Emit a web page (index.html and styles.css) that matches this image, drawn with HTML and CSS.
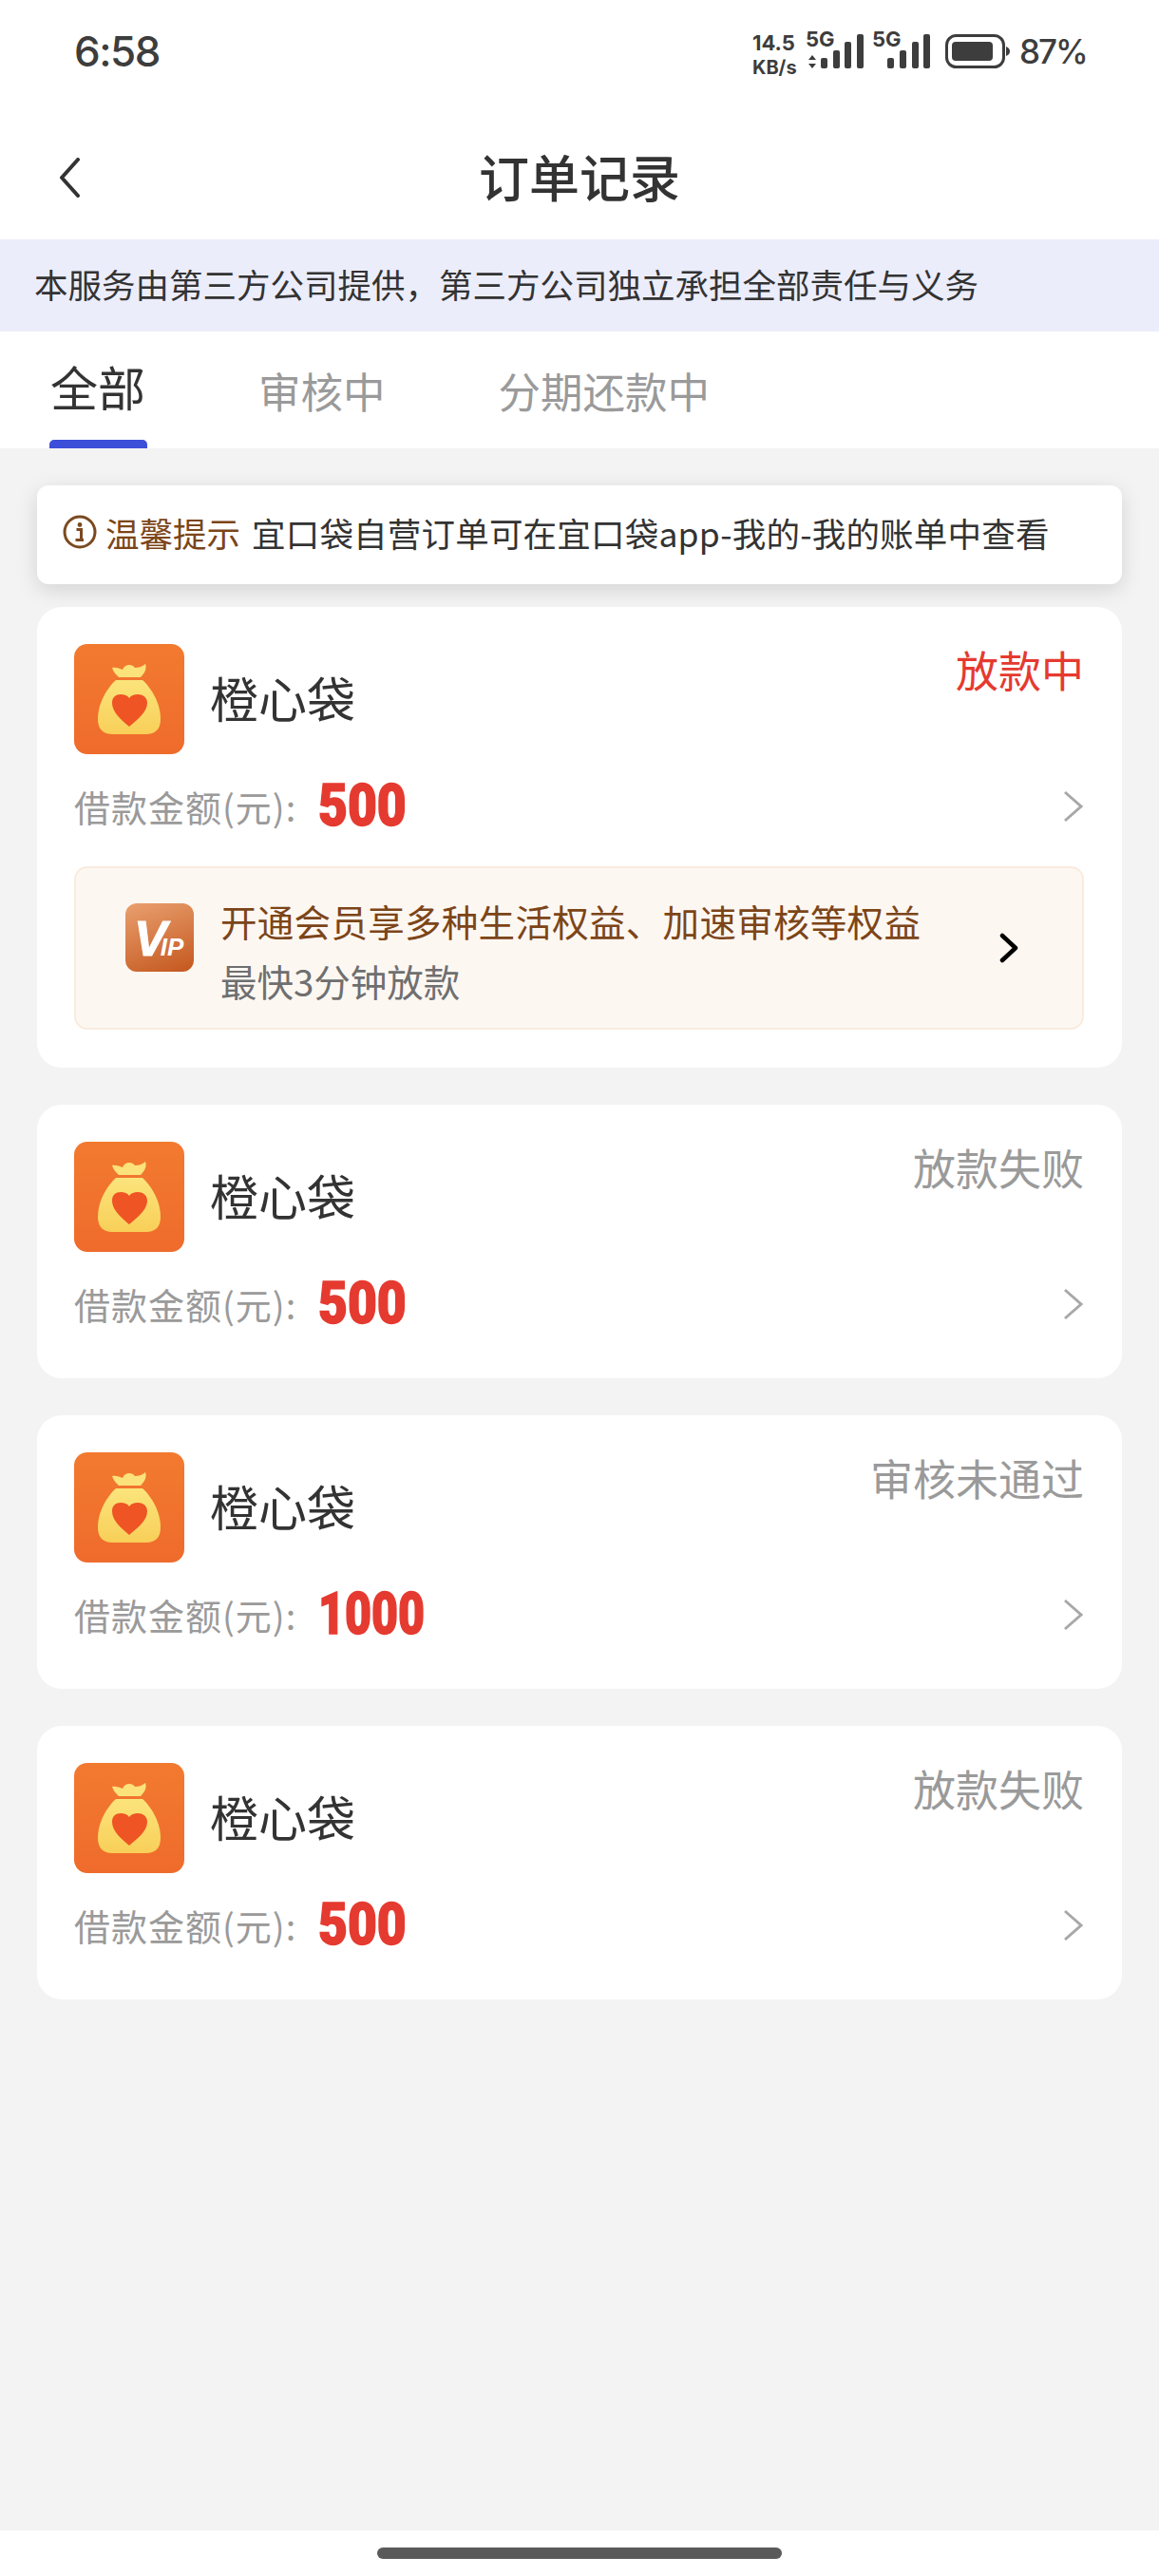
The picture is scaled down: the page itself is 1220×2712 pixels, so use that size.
FILE: index.html
```html
<!DOCTYPE html>
<html lang="zh-CN">
<head>
    <meta charset="UTF-8">
    <meta name="viewport" content="width=device-width, initial-scale=1.0">
    <title>订单记录</title>
    <link rel="stylesheet" href="styles.css">
</head>
<body>
<svg class="sprites" width="0" height="0">
    <defs>
        <linearGradient id="logoBg" x1="0" y1="0" x2="0" y2="1">
            <stop offset="0" stop-color="#f27a2f"/>
            <stop offset="1" stop-color="#ef6b2c"/>
        </linearGradient>
        <linearGradient id="bagFill" x1="0" y1="0" x2="0" y2="1">
            <stop offset="0" stop-color="#fbe47c"/>
            <stop offset="1" stop-color="#f8cf58"/>
        </linearGradient>
        <symbol id="bagLogo" viewBox="0 0 116 116">
            <rect width="116" height="116" rx="14" fill="url(#logoBg)"/>
            <path d="M40 25 C44 24 48 26 51 27 C53 22 60 20 64 25 C68 25 71 24 75 21 C77 26 74 31 70 35 L47 35 C44 32 41 29 40 25Z" fill="#fbe27a"/>
            <path d="M44 38 L72 38 C81 46 91 62 91 79 C91 90 85 95 76 95 L40 95 C31 95 25 90 25 79 C25 62 35 46 44 38Z" fill="url(#bagFill)"/>
            <path d="M58 87 C50 80 40 72 40 62 C40 56 44 53 49 53 C53 53 56 54 58 57 C60 54 63 53 67 53 C72 53 77 56 77 62 C77 72 66 80 58 87Z" fill="#ee5424"/>
        </symbol>
    </defs>
</svg>

<div class="page">
    <div class="status-bar">
        <span class="time">6:58</span>
        <div class="status-icons">
            <div class="speed"><span>14.5</span><span class="speed-unit">KB/s</span></div>
            <div class="signal first">
                <span class="net">5G</span>
                <svg width="66" height="42" viewBox="0 0 66 42">
                    <path d="M7 26l4 5H3zM7 40l4-5H3z" fill="#3d3d3d"/>
                    <rect x="16" y="29" width="7" height="11" rx="2" fill="#3d3d3d"/>
                    <rect x="29" y="21" width="7" height="19" rx="2" fill="#3d3d3d"/>
                    <rect x="41" y="12" width="7" height="28" rx="2" fill="#3d3d3d"/>
                    <rect x="54" y="4" width="7" height="36" rx="2" fill="#3d3d3d"/>
                </svg>
            </div>
            <div class="signal">
                <span class="net">5G</span>
                <svg width="62" height="42" viewBox="0 0 62 42">
                    <rect x="16" y="29" width="7" height="11" rx="2" fill="#3d3d3d"/>
                    <rect x="29" y="21" width="7" height="19" rx="2" fill="#3d3d3d"/>
                    <rect x="42" y="12" width="7" height="28" rx="2" fill="#3d3d3d"/>
                    <rect x="54" y="4" width="7" height="36" rx="2" fill="#3d3d3d"/>
                </svg>
            </div>
            <svg class="battery" width="68" height="36" viewBox="0 0 68 36">
                <rect x="1.5" y="1.5" width="60" height="33" rx="10" fill="none" stroke="#3d3d3d" stroke-width="3"/>
                <rect x="7" y="8" width="43" height="20" rx="4" fill="#3d3d3d"/>
                <path d="M64 13c3 1 4 3 4 5s-1 4-4 5z" fill="#3d3d3d"/>
            </svg>
            <span class="percent">87%</span>
        </div>
    </div>

    <div class="nav">
        <svg class="back" width="24" height="42" viewBox="0 0 24 42">
            <path d="M21 2 L4 21 L21 40" fill="none" stroke="#333" stroke-width="4" stroke-linecap="round" stroke-linejoin="round"/>
        </svg>
        <h1>订单记录</h1>
    </div>

    <div class="banner">本服务由第三方公司提供，第三方公司独立承担全部责任与义务</div>

    <div class="tabs">
        <div class="tab active">全部</div>
        <div class="tab">审核中</div>
        <div class="tab">分期还款中</div>
    </div>

    <div class="content">
        <div class="notice">
            <svg class="notice-icon" width="36" height="36" viewBox="0 0 36 36">
                <circle cx="18" cy="18" r="16" fill="none" stroke="#7b4a20" stroke-width="3"/>
                <circle cx="18" cy="10.5" r="2.4" fill="#7b4a20"/>
                <path d="M14.5 15.5h5v11h2.5M13.5 26.5h8" fill="none" stroke="#7b4a20" stroke-width="3"/>
            </svg>
            <span class="notice-title">温馨提示</span>
            <span class="notice-text">宜口袋自营订单可在宜口袋app-我的-我的账单中查看</span>
        </div>

        <div class="order">
            <div class="order-head">
                <svg class="logo"><use href="#bagLogo"/></svg>
                <span class="order-name">橙心袋</span>
                <span class="order-status pending">放款中</span>
            </div>
            <div class="order-amount">
                <span class="amount-label">借款金额(元):</span>
                <span class="amount-value">500</span>
                <svg class="more" width="22" height="34" viewBox="0 0 22 34"><path d="M2 2 L19 17 L2 32" fill="none" stroke="#a8a8a8" stroke-width="3"/></svg>
            </div>
            <div class="promo">
                <div class="vip-badge"><span class="vip-v">V</span><span class="vip-ip">IP</span></div>
                <div class="promo-text">
                    <div class="promo-title">开通会员享多种生活权益、加速审核等权益</div>
                    <div class="promo-sub">最快3分钟放款</div>
                </div>
                <svg class="promo-arrow" width="20" height="32" viewBox="0 0 20 32"><path d="M3 3 L17 16 L3 29" fill="none" stroke="#000" stroke-width="4.5" stroke-linecap="round" stroke-linejoin="round"/></svg>
            </div>
        </div>

        <div class="order">
            <div class="order-head">
                <svg class="logo"><use href="#bagLogo"/></svg>
                <span class="order-name">橙心袋</span>
                <span class="order-status">放款失败</span>
            </div>
            <div class="order-amount">
                <span class="amount-label">借款金额(元):</span>
                <span class="amount-value">500</span>
                <svg class="more" width="22" height="34" viewBox="0 0 22 34"><path d="M2 2 L19 17 L2 32" fill="none" stroke="#a8a8a8" stroke-width="3"/></svg>
            </div>
        </div>

        <div class="order">
            <div class="order-head">
                <svg class="logo"><use href="#bagLogo"/></svg>
                <span class="order-name">橙心袋</span>
                <span class="order-status">审核未通过</span>
            </div>
            <div class="order-amount">
                <span class="amount-label">借款金额(元):</span>
                <span class="amount-value long">1000</span>
                <svg class="more" width="22" height="34" viewBox="0 0 22 34"><path d="M2 2 L19 17 L2 32" fill="none" stroke="#a8a8a8" stroke-width="3"/></svg>
            </div>
        </div>

        <div class="order">
            <div class="order-head">
                <svg class="logo"><use href="#bagLogo"/></svg>
                <span class="order-name">橙心袋</span>
                <span class="order-status">放款失败</span>
            </div>
            <div class="order-amount">
                <span class="amount-label">借款金额(元):</span>
                <span class="amount-value">500</span>
                <svg class="more" width="22" height="34" viewBox="0 0 22 34"><path d="M2 2 L19 17 L2 32" fill="none" stroke="#a8a8a8" stroke-width="3"/></svg>
            </div>
        </div>
    </div>

    <div class="home-bar"><div class="home-pill"></div></div>
</div>
</body>
</html>
```

FILE: styles.css
```css
:root {
    --text: #333333;
    --gray: #9a9a9a;
    --red: #e53a30;
    --brown: #7c4518;
    --bg: #f3f3f3;
}

* {
    margin: 0;
    padding: 0;
    box-sizing: border-box;
}

body {
    font-family: "Noto Sans CJK SC", "Noto Sans", sans-serif;
    background: #ffffff;
    color: var(--text);
}

.sprites {
    position: absolute;
}

.page {
    width: 1220px;
    height: 2712px;
    display: flex;
    flex-direction: column;
}

/* Status bar */
.status-bar {
    height: 108px;
    display: flex;
    justify-content: space-between;
    align-items: flex-start;
    padding: 28px 77px 0 78px;
    font-family: Inter, "Noto Sans", sans-serif;
    color: #3d3d3d;
}

.time {
    font-size: 44px;
    line-height: 52px;
    font-weight: 500;
    letter-spacing: -1.5px;
}

.status-icons {
    display: flex;
    align-items: flex-start;
    margin-top: 4px;
}

.speed {
    width: 56px;
    display: flex;
    flex-direction: column;
    font-size: 22px;
    font-weight: 700;
    line-height: 26px;
}

.speed-unit {
    font-size: 20px;
}

.signal {
    position: relative;
    display: flex;
    margin-right: 15px;
}

.signal.first {
    margin-right: 4px;
}

.net {
    position: absolute;
    left: 0;
    top: -4px;
    font-size: 22px;
    font-weight: 700;
    line-height: 26px;
}

.battery {
    margin: 4px 10px 0 0;
}

.percent {
    width: 70px;
    font-size: 35px;
    line-height: 44px;
    font-weight: 500;
    letter-spacing: -2px;
    white-space: nowrap;
}

/* Header */
.nav {
    height: 144px;
    position: relative;
    display: flex;
    justify-content: center;
    align-items: center;
    padding-top: 10px;
}

.back {
    position: absolute;
    left: 61px;
    top: 58px;
}

.nav h1 {
    font-size: 53px;
    font-weight: 500;
    line-height: 70px;
}

.banner {
    height: 97px;
    background: #ecedfb;
    padding-left: 36px;
    font-size: 35.5px;
    line-height: 94px;
}

/* Tabs */
.tabs {
    height: 123px;
    display: flex;
    padding-left: 53px;
    gap: 119px;
}

.tab {
    position: relative;
    font-size: 44.5px;
    line-height: 123px;
    height: 123px;
    color: var(--gray);
}

.tab.active {
    font-size: 50px;
    line-height: 115px;
    color: var(--text);
}

.tab.active::after {
    content: "";
    position: absolute;
    left: -1px;
    right: -2px;
    bottom: 0;
    height: 9px;
    background: #3b4fd9;
    border-radius: 5px 5px 0 0;
}

/* List */
.content {
    flex: 1;
    background: var(--bg);
    padding: 39px 39px 0;
    display: flex;
    flex-direction: column;
    gap: 39px;
}

.notice {
    height: 104px;
    margin-bottom: -15px;
    background: #ffffff;
    border-radius: 12px;
    box-shadow: 0 6px 22px rgba(0, 0, 0, 0.13);
    display: flex;
    align-items: center;
    padding: 0 0 6px 27px;
    font-size: 35.5px;
    position: relative;
}

.notice-icon {
    margin-right: 9px;
}

.notice-title {
    color: var(--brown);
    margin-right: 12px;
}

.notice-text {
    letter-spacing: 0.2px;
}

.order {
    background: #ffffff;
    border-radius: 26px;
    padding: 39px 40px 39px 39px;
}

.order-head {
    display: flex;
    align-items: center;
}

.logo {
    width: 116px;
    height: 116px;
}

.order-name {
    margin: -4px 0 0 27px;
    font-size: 51px;
    line-height: 70px;
}

.order-status {
    margin: -2px 0 0 auto;
    align-self: flex-start;
    font-size: 45px;
    line-height: 58px;
    color: var(--gray);
}

.order-status.pending {
    color: var(--red);
}

.order-amount {
    height: 60px;
    margin: 24px 0 10px;
    display: flex;
    align-items: center;
}

.amount-label {
    font-size: 38px;
    letter-spacing: 1px;
    color: var(--gray);
}

.amount-value {
    display: inline-block;
    margin-left: 23px;
    font-family: Roboto, sans-serif;
    font-size: 62px;
    font-weight: 900;
    line-height: 60px;
    color: var(--red);
    -webkit-text-stroke: 1.5px var(--red);
    transform: scaleX(0.86);
    transform-origin: left center;
}

.amount-value.long {
    transform: scaleX(0.78);
}

.more {
    margin: 2px 0 0 auto;
}

/* VIP promo */
.promo {
    height: 172px;
    margin: 34px 0 1px;
    background: #fdf7f2;
    border: 2px solid #f9ebdf;
    border-radius: 14px;
    display: flex;
    align-items: flex-start;
    padding: 24px 67px 0 52px;
}

.vip-badge {
    width: 72px;
    height: 72px;
    margin-top: 13px;
    flex: none;
    border-radius: 12px;
    background: linear-gradient(160deg, #e9a06f, #c4571e);
    color: #ffffff;
    font-family: "Liberation Sans", sans-serif;
    font-weight: 700;
    font-style: italic;
    display: flex;
    align-items: baseline;
    padding: 10px 0 0 9px;
}

.vip-v {
    font-size: 52px;
    line-height: 54px;
    -webkit-text-stroke: 1px #ffffff;
}

.vip-ip {
    font-size: 26px;
    line-height: 27px;
    margin-left: -7px;
}

.promo-text {
    margin-left: 28px;
    font-size: 38.5px;
    line-height: 63px;
}

.promo-title {
    color: var(--brown);
    letter-spacing: 0.3px;
}

.promo-sub {
    color: #6f6f6f;
}

.promo-arrow {
    margin-left: auto;
    align-self: center;
    margin-top: -24px;
}

/* Home indicator */
.home-bar {
    height: 48px;
    background: #ffffff;
    display: flex;
    justify-content: center;
    padding-top: 18px;
}

.home-pill {
    width: 426px;
    height: 12px;
    background: #5a5a5a;
    border-radius: 6px;
}
```
